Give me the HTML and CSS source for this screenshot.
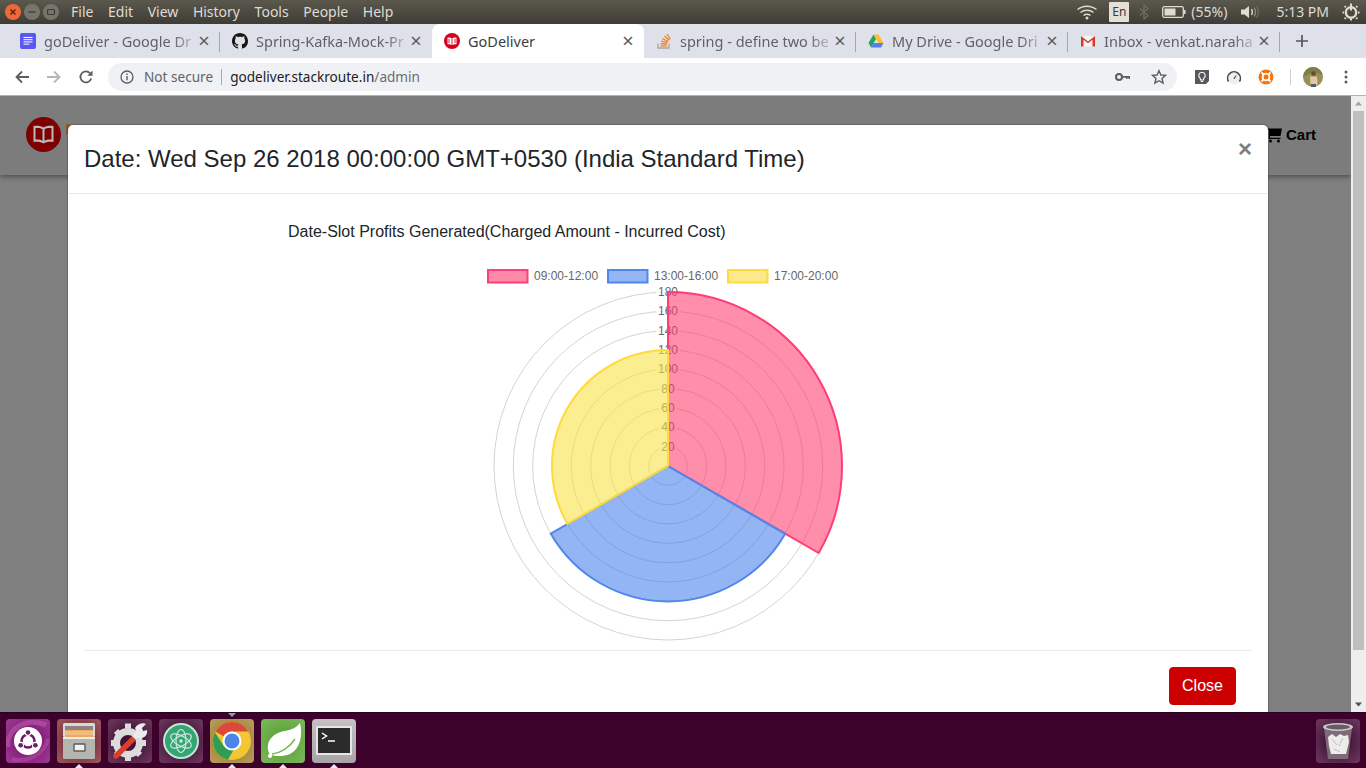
FILE: index.html
```
<!DOCTYPE html>
<html lang="en">
<head>
<meta charset="utf-8">
<title>GoDeliver</title>
<link rel="stylesheet" href="styles.css">
</head>
<body>
<div class="screen">
  <header class="topbar">
    <div class="winbtns">
      <span class="winbtn close"><svg viewBox="0 0 16 16" width="16" height="16"><path d="M5.5 5.5l5 5M10.500 5.500l-5 5" stroke="#5a1a08" stroke-width="1.300" fill="none"/></svg></span>
      <span class="winbtn"><svg viewBox="0 0 16 16" width="16" height="16"><path d="M4.500 8h7" stroke="#3b3a35" stroke-width="1.300" fill="none"/></svg></span>
      <span class="winbtn"><svg viewBox="0 0 16 16" width="16" height="16"><rect x="4.500" y="5.500" width="7" height="5" rx="1" stroke="#3b3a35" stroke-width="1.200" fill="none"/></svg></span>
    </div>
    <nav class="menu"><span>File</span><span>Edit</span><span>View</span><span>History</span><span>Tools</span><span>People</span><span>Help</span></nav>
    <div class="tray">
      <svg class="t-wifi" viewBox="0 0 22 16" width="22" height="16"><g fill="none" stroke="#dfdbd2" stroke-width="1.500"><path d="M1.500 5.500c5.500-4.500 13.500-4.500 19 0"/><path d="M4.500 8.500c3.800-3 9.200-3 13 0"/><path d="M7.500 11.500c2-1.500 5-1.500 7 0"/></g><circle cx="11" cy="14" r="1.500" fill="#dfdbd2"/></svg>
      <span class="t-en">En</span>
      <svg class="t-bt" viewBox="0 0 10 16" width="10" height="16"><path d="M1 4.500l8 7-4 3.500v-14l4 3.500-8 7" fill="none" stroke="#6f6c62" stroke-width="1.300"/></svg>
      <svg class="t-batt" viewBox="0 0 24 14" width="24" height="14"><rect x=".7" y="1.700" width="20.600" height="10.600" rx="1.500" fill="none" stroke="#dfdbd2" stroke-width="1.300"/><rect x="2.500" y="3.500" width="11" height="7" fill="#dfdbd2"/><rect x="22" y="5" width="1.500" height="4" fill="#dfdbd2"/></svg>
      <span class="t-pct">(55%)</span>
      <svg class="t-vol" viewBox="0 0 22 16" width="22" height="16"><path d="M1 5.500h3.500L9 2v12l-4.500-3.500H1z" fill="#dfdbd2"/><g fill="none" stroke-width="1.300"><path d="M11.500 5c1.200 2 1.200 4 0 6" stroke="#dfdbd2"/><path d="M14 3.500c2 3 2 6 0 9" stroke="#8d8a80"/><path d="M16.500 2c2.600 4 2.600 8 0 12" stroke="#6f6c62"/></g></svg>
      <span class="t-time">5:13 PM</span>
      <svg class="t-gear" viewBox="0 0 18 18" width="18" height="18"><g fill="none" stroke="#dfdbd2"><circle cx="9" cy="9.500" r="5.200" stroke-width="2.400"/><path d="M9 .5v7" stroke-width="2"/><path d="M9 15.500v2M2 9.500H.5M17.500 9.500H16M3.800 4.300L2.600 3.100M15.400 15.900l-1.200-1.200M3.800 14.700l-1.200 1.200M15.400 3.100l-1.200 1.200" stroke-width="2"/></g></svg>
    </div>
  </header>

  <div class="tabstrip">
    <div class="tab">
      <svg class="fav" viewBox="0 0 16 16" width="16" height="16"><rect width="16" height="16" rx="2" fill="#5a57f2"/><path d="M3.500 4.500h9M3.500 6.700h9M3.500 8.900h9M3.500 11.100h6" stroke="#fff" stroke-width="1"/></svg>
      <span class="title">goDeliver - Google Dr</span><span class="x">×</span>
    </div>
    <div class="tab">
      <svg class="fav" viewBox="0 0 16 16" width="16" height="16"><path fill="#161614" d="M8 0C3.580 0 0 3.580 0 8c0 3.540 2.290 6.530 5.470 7.590.4.070.55-.17.550-.38 0-.19-.01-.82-.01-1.490-2.010.37-2.530-.49-2.690-.94-.09-.23-.48-.94-.82-1.130-.28-.15-.68-.52-.01-.53.630-.01 1.080.58 1.230.82.720 1.210 1.870.87 2.330.66.070-.52.280-.87.510-1.070-1.780-.2-3.640-.89-3.640-3.950 0-.87.310-1.590.820-2.150-.08-.2-.36-1.020.08-2.120 0 0 .67-.21 2.200.82.640-.18 1.320-.27 2-.27s1.360.09 2 .27c1.530-1.040 2.200-.82 2.200-.82.440 1.100.160 1.920.08 2.120.51.560.820 1.270.820 2.150 0 3.070-1.870 3.750-3.650 3.950.290.250.540.730.540 1.480 0 1.070-.01 1.930-.01 2.200 0 .210.150.460.550.380A8.013 8.013 0 0016 8c0-4.420-3.580-8-8-8z"/></svg>
      <span class="title">Spring-Kafka-Mock-Pr</span><span class="x">×</span>
    </div>
    <div class="tab active">
      <svg class="fav" viewBox="0 0 16 16" width="16" height="16"><circle cx="8" cy="8" r="8" fill="#d6001c"/><path d="M8 5.400C7 4.700 5.500 4.400 3.500 4.600v6.600c2-.2 3.500.1 4.500.8 1-.7 2.500-1 4.500-.8V4.600C10.500 4.400 9 4.700 8 5.400z" fill="#fff"/><path d="M8 5.500v6M5 5.800v4.300" stroke="#d6001c" stroke-width=".9"/><path d="M11 5.800v4.300" stroke="#d6001c" stroke-width=".9"/></svg>
      <span class="title">GoDeliver</span><span class="x">×</span>
    </div>
    <div class="tab">
      <svg class="fav" viewBox="0 0 16 16" width="16" height="16"><path d="M2 10.500v4.500h11v-4.500" fill="none" stroke="#a9a59c" stroke-width="1.300"/><path d="M4.500 12.800h6.500M4.700 10.500l6.400.6M5.300 8.200l6.300 1.500M6.500 5.600l5.700 2.900M8.500 3l4.800 4.200M11.200 1l3 5.200" stroke="#f48024" stroke-width="1.300"/></svg>
      <span class="title">spring - define two be</span><span class="x">×</span>
    </div>
    <div class="tab">
      <svg class="fav" viewBox="0 0 16 16" width="16" height="16"><path d="M5.500 1.500h5l5 8.500h-5z" fill="#fbc02d"/><path d="M5.500 1.500L.5 10l2.500 4.500L8 6z" fill="#1fa463"/><path d="M3 14.500h10l2.500-4.500H5.500z" fill="#5a7df0"/></svg>
      <span class="title">My Drive - Google Dri</span><span class="x">×</span>
    </div>
    <div class="tab">
      <svg class="fav" viewBox="0 0 16 16" width="16" height="16"><path d="M1 3h14v10.500H1z" fill="#f4f4f4"/><path d="M1 13.500V3l7 5.500L15 3v10.500h-2.500V6.800L8 10.300 3.500 6.800v6.700z" fill="#d23a2a"/></svg>
      <span class="title">Inbox - venkat.naraha</span><span class="x">×</span>
    </div>
    <svg class="newtab" viewBox="0 0 14 14" width="14" height="14"><path d="M7 1v12M1 7h12" stroke="#55585e" stroke-width="1.700"/></svg>
  </div>

  <div class="toolbar">
    <svg class="tbtn" viewBox="0 0 16 16" width="16" height="16"><path d="M15 8H2.500M8 2.500L2.500 8 8 13.500" fill="none" stroke="#5a5d62" stroke-width="1.800"/></svg>
    <svg class="tbtn" viewBox="0 0 16 16" width="16" height="16"><path d="M1 8h12.500M8 2.500L13.500 8 8 13.500" fill="none" stroke="#b4b6b9" stroke-width="1.800"/></svg>
    <svg class="tbtn" viewBox="0 0 16 16" width="16" height="16"><path d="M13.200 9.500A5.500 5.500 0 1 1 12 4.200" fill="none" stroke="#5a5d62" stroke-width="1.800"/><path d="M14.500 1.500v5.200H9.300z" fill="#5a5d62"/></svg>
    <div class="omnibox">
      <svg class="info" viewBox="0 0 14 14" width="14" height="14"><circle cx="7" cy="7" r="6" fill="none" stroke="#5a5d62" stroke-width="1.300"/><path d="M7 6v4.300M7 3.500v1.500" stroke="#5a5d62" stroke-width="1.400"/></svg>
      <span class="notsecure">Not secure</span>
      <span class="sep"></span>
      <span class="url">godeliver.stackroute.in<span class="path">/admin</span></span>
      <span class="grow"></span>
      <svg class="key" viewBox="0 0 16 10" width="16" height="10"><circle cx="4" cy="5" r="3" fill="none" stroke="#5a5d62" stroke-width="2"/><path d="M6.500 4h8.500v3h-1.500V5.800h-1V7H11V5.800H6.500z" fill="#5a5d62"/></svg>
      <svg class="star" viewBox="0 0 16 16" width="16" height="16"><path d="M8 1.700l1.900 4.300 4.700.4-3.600 3.100 1.100 4.600L8 11.700l-4.100 2.400L5 9.500 1.400 6.400l4.700-.4z" fill="none" stroke="#5a5d62" stroke-width="1.400"/></svg>
    </div>
    <div class="exts">
      <svg viewBox="0 0 16 16" width="16" height="16"><path d="M1 1h14v11l-3 3H1z" fill="#55585e"/><path d="M8 3.200a3.300 3.300 0 0 0-1.800 6l.3 1.800h3l.3-1.800a3.300 3.300 0 0 0-1.800-6z" fill="none" stroke="#fff" stroke-width="1.100"/><path d="M6.800 12.500h2.400" stroke="#fff" stroke-width="1.100"/></svg>
      <svg viewBox="0 0 16 16" width="16" height="16"><circle cx="8" cy="8.500" r="7" fill="#eeeeee"/><path d="M2.500 12.500a6.400 6.400 0 1 1 11 0" fill="none" stroke="#44474c" stroke-width="1.500"/><path d="M7.300 9.300L11 5.200 8.800 10z" fill="#44474c"/></svg>
      <svg viewBox="0 0 16 16" width="16" height="16"><circle cx="8" cy="8" r="7.500" fill="#f4730c"/><circle cx="8" cy="8" r="3.400" fill="none" stroke="#fff" stroke-width="1.800"/><path d="M3.500 3.500l2.500 2.500M12.500 3.500L10 6M3.500 12.500L6 10M12.500 12.500L10 10" stroke="#fff" stroke-width="1.800"/></svg>
    </div>
    <span class="tsep"></span>
    <svg class="avatar" viewBox="0 0 20 20" width="20" height="20"><circle cx="10" cy="10" r="10" fill="#9a8f5a"/><path d="M0 10a10 10 0 0 1 10-10c5 0 8 3 10 8l-8-3-6 2z" fill="#7a8044"/><circle cx="10.500" cy="6.500" r="2.300" fill="#6b4a30"/><path d="M7 9.500h7l.5 8-2 2h-3l-2-2z" fill="#e2c9a0"/><path d="M8 17h5v3H8z" fill="#4a5a78"/></svg>
    <svg class="dots" viewBox="0 0 4 14" width="4" height="14"><circle cx="2" cy="2" r="1.500" fill="#5a5d62"/><circle cx="2" cy="7" r="1.500" fill="#5a5d62"/><circle cx="2" cy="12" r="1.500" fill="#5a5d62"/></svg>
  </div>

  <main class="page">
    <div class="site">
      <div class="navbar">
        <svg class="logo" viewBox="0 0 35 35" width="35" height="35"><circle cx="17.500" cy="17.500" r="17.500" fill="#7f0000"/><path d="M17.500 10.500C15 8.800 11.500 8.300 7.500 9v16c4-.7 7.500-.2 10 1.500 2.500-1.700 6-2.200 10-1.500V9c-4-.7-7.500-.2-10 1.500z" fill="#b9b9b9"/><path d="M9.500 11c3-.3 5.500.1 7 1.200v11.500c-1.500-1-4-1.400-7-1.200zM25.500 11c-3-.3-5.500.1-7 1.200v11.500c1.500-1 4-1.400 7-1.200z" fill="#7f0000"/></svg>
        <span class="brand-sliver"></span>
        <span class="nav-red"></span>
        <span class="grow"></span>
        <svg class="cart" viewBox="0 0 16 16" width="16" height="16"><path d="M0 1.500h16L14.500 9H4v1.800h10.500v1.200H2.800V2.700H0z" fill="#000"/><circle cx="4.500" cy="14" r="1.500" fill="#000"/><circle cx="12.500" cy="14" r="1.500" fill="#000"/></svg>
        <span class="cart-label">Cart</span>
      </div>
    </div>
    <div class="scrollbar">
      <svg class="arrow" viewBox="0 0 15 15" width="15" height="15"><path d="M4 9.500h7L7.500 5.500z" fill="#a0a0a0"/></svg>
      <span class="thumb"></span>
      <svg class="arrow" viewBox="0 0 15 15" width="15" height="15"><path d="M4 5.500h7L7.500 9.500z" fill="#505050"/></svg>
    </div>
    <div class="overlay">
      <section class="modal">
        <div class="modal-header">
          <h5 class="modal-title">Date: Wed Sep 26 2018 00:00:00 GMT+0530 (India Standard Time)</h5>
          <span class="modal-x">×</span>
        </div>
        <div class="modal-body">
          <svg class="chart" viewBox="84 194 1168 456" width="1168" height="456">
            <text class="c-title" x="288" y="237">Date-Slot Profits Generated(Charged Amount - Incurred Cost)</text>
            <g class="legend">
              <rect x="488" y="270" width="39.500" height="12.500" fill="#ff8aa8" stroke="#ff3d77" stroke-width="2"/>
              <text x="534" y="280">09:00-12:00</text>
              <rect x="608" y="270" width="39.500" height="12.500" fill="#95b6f5" stroke="#4f87ec" stroke-width="2"/>
              <text x="654" y="280">13:00-16:00</text>
              <rect x="728" y="270" width="39.500" height="12.500" fill="#fbe98a" stroke="#ffdb3a" stroke-width="2"/>
              <text x="774" y="280">17:00-20:00</text>
            </g>
            <g class="grid">
              <circle cx="668" cy="466" r="19.300"/><circle cx="668" cy="466" r="38.700"/><circle cx="668" cy="466" r="58"/><circle cx="668" cy="466" r="77.300"/><circle cx="668" cy="466" r="96.700"/><circle cx="668" cy="466" r="116"/><circle cx="668" cy="466" r="135.300"/><circle cx="668" cy="466" r="154.700"/><circle cx="668" cy="466" r="174"/>
            </g>
            <g class="backdrops">
              <rect x="659" y="441" width="18" height="13"/><rect x="659" y="421" width="18" height="13"/><rect x="659" y="402" width="18" height="13"/><rect x="659" y="383" width="18" height="13"/><rect x="656" y="363" width="24" height="13"/><rect x="656" y="344" width="24" height="13"/><rect x="656" y="325" width="24" height="13"/><rect x="656" y="305" width="24" height="13"/><rect x="656" y="286" width="24" height="13"/>
            </g>
            <g class="ticks">
              <text x="668" y="451">20</text><text x="668" y="431">40</text><text x="668" y="412">60</text><text x="668" y="393">80</text><text x="668" y="373">100</text><text x="668" y="354">120</text><text x="668" y="335">140</text><text x="668" y="315">160</text><text x="668" y="296">180</text>
            </g>
            <path class="s-pink" d="M668 466V292A174 174 0 0 1 818.700 553Z"/>
            <path class="s-blue" d="M668 466L785.200 533.700A135.300 135.300 0 0 1 550.800 533.700Z"/>
            <path class="s-yellow" d="M668 466L567.500 524A116 116 0 0 1 668 350Z"/>
          </svg>
        </div>
        <div class="modal-footer"><button class="btn-close" type="button">Close</button></div>
      </section>
    </div>
  </main>

  <footer class="dock">
    <span class="dock-arrow a-top"></span>
    <div class="tile t-ubuntu"><svg viewBox="0 0 44 44" width="44" height="44"><path d="M2 28C0 10 20 -2 40 6" fill="none" stroke="#c86ab4" stroke-width="5" opacity=".45"/><path d="M6 40c14 4 32-4 36-20" fill="none" stroke="#c86ab4" stroke-width="4" opacity=".35"/><circle cx="22" cy="22" r="14" fill="#fff"/><circle cx="22" cy="22" r="6.500" fill="none" stroke="#6d1b66" stroke-width="2.500"/><circle cx="22" cy="13.500" r="3.400" fill="#fff"/><circle cx="14.600" cy="26.200" r="3.400" fill="#fff"/><circle cx="29.400" cy="26.200" r="3.400" fill="#fff"/><circle cx="22" cy="13.500" r="2.300" fill="#6d1b66"/><circle cx="14.600" cy="26.200" r="2.300" fill="#6d1b66"/><circle cx="29.400" cy="26.200" r="2.300" fill="#6d1b66"/></svg></div>
    <div class="tile t-files"><svg viewBox="0 0 44 44" width="44" height="44"><rect x="6" y="4" width="32" height="14" rx="1.500" fill="#d8d8d4"/><rect x="8" y="7" width="28" height="11" fill="#8a857e"/><rect x="8" y="11" width="28" height="7" fill="#f0a860"/><path d="M8 13h28M8 15h28" stroke="#f9d9a8" stroke-width=".8"/><rect x="6" y="18" width="32" height="22" rx="1.500" fill="#b5b5b0"/><rect x="6" y="18" width="32" height="2" fill="#ececea"/><rect x="17" y="25" width="11" height="7" rx=".5" fill="#f1f1ee" stroke="#5c5c58" stroke-width="1.400"/></svg></div>
    <div class="tile t-tools"><svg viewBox="0 0 44 44" width="44" height="44"><circle cx="20" cy="24" r="11.500" fill="none" stroke="#dcdcdc" stroke-width="7"/><g stroke="#dcdcdc" stroke-width="6"><path d="M20 4.500v5M20 38v4M3 24h5M32 24h6M8 12l3.500 3.500M28.500 32.500l3.500 3.500M8 36l3.500-3.500"/></g><path d="M8 37L27 18" stroke="#d8402a" stroke-width="5.500" stroke-linecap="round"/><path d="M26 19l5-5" stroke="#ececec" stroke-width="6"/><path d="M27 9c2-4 8-6 11-4l-4 4 1 3 4-1c1 4-2 9-8 8z" fill="#ececec"/></svg></div>
    <div class="tile t-atom"><svg viewBox="0 0 44 44" width="44" height="44"><circle cx="22" cy="22" r="17" fill="#35a574" stroke="#c4e6d4" stroke-width="2"/><g fill="none" stroke="#cfe9dc" stroke-width="1.200"><ellipse cx="22" cy="22" rx="11.500" ry="5" transform="rotate(30 22 22)"/><ellipse cx="22" cy="22" rx="11.500" ry="5" transform="rotate(90 22 22)"/><ellipse cx="22" cy="22" rx="11.500" ry="5" transform="rotate(150 22 22)"/></g><circle cx="22" cy="22" r="1.800" fill="#cfe9dc"/></svg></div>
    <div class="tile t-chrome"><svg viewBox="0 0 44 44" width="44" height="44"><circle cx="22" cy="22" r="19" fill="#f5c633"/><path d="M22 3a19 19 0 0 1 16.500 9.500H22A9.500 9.500 0 0 0 13.800 17.200L5.500 12.500A19 19 0 0 1 22 3z" fill="#d9493c"/><path d="M5 13.500a19 19 0 0 0 13 27.100l8-13.800A9.500 9.500 0 0 1 13.500 26.500z" fill="#2d9e52"/><circle cx="22" cy="22" r="9.500" fill="#fff"/><circle cx="22" cy="22" r="7.500" fill="#4a86e8"/></svg></div>
    <div class="tile t-spring"><svg viewBox="0 0 44 44" width="44" height="44"><path d="M9 36C2 22 14 13 24 12c6-1 11-3 15-8 3 13 0 26-10 31-7 3-14 2-20 1z" fill="#fff"/><path d="M11 35c9-1 18-7 23-15" fill="none" stroke="#78b854" stroke-width="1.500"/><circle cx="9" cy="37" r="2" fill="#fff"/></svg></div>
    <div class="tile t-term"><svg viewBox="0 0 44 44" width="44" height="44"><rect x="4" y="7" width="36" height="29" rx="1" fill="#e6e6e6"/><rect x="6" y="9" width="32" height="25" fill="#2b2b2b"/><path d="M10 14l4.500 3L10 20" fill="none" stroke="#fff" stroke-width="1.500"/><path d="M16 22h7" stroke="#fff" stroke-width="1.500"/></svg></div>
    <span class="grow"></span>
    <div class="tile t-trash"><svg viewBox="0 0 44 44" width="44" height="44"><path d="M8 9l4 31h20l4-31z" fill="#7d6c78"/><ellipse cx="22" cy="8" rx="15" ry="4" fill="#c9c9c9"/><ellipse cx="22" cy="8" rx="12" ry="2.500" fill="#6a5a66"/><path d="M12 18l4-3 4 3 4-3 4 2 4-1 1 7-3 12H15l-2-8z" fill="#ececec"/><path d="M16 20l5 6M27 19l-4 8M18 30l6 3" stroke="#bdbdbd" stroke-width="1"/></svg></div>
    <span class="dock-arrow b1"></span><span class="dock-arrow b2"></span><span class="dock-arrow b3"></span><span class="dock-arrow b4"></span>
  </footer>
</div>
</body>
</html>
```
FILE: styles.css
```
* { box-sizing: border-box; }
html, body { margin: 0; height: 100%; overflow: hidden; }
body { font-family: "Noto Sans", "Open Sans", sans-serif; }
.screen { width: 1366px; height: 768px; display: flex; flex-direction: column; position: relative; overflow: hidden; }
.grow { flex: 1; }

/* top system bar */
.topbar { height: 24px; flex: none; display: flex; align-items: center; background: linear-gradient(#5b584d, #3e3c36); color: #dfdbd2; font-size: 14px; }
.winbtns { display: flex; gap: 3px; padding-left: 5px; }
.winbtn { width: 16px; height: 16px; border-radius: 50%; background: #76746b; display: block; }
.winbtn svg { display: block; }
.winbtn.close { background: #ec6a3a; }
.menu { display: flex; gap: 14.600px; margin-left: 12px; padding-bottom: 2px; }
.tray { margin-left: auto; display: flex; align-items: center; }
.t-wifi { margin-right: 11px; }
.t-en { width: 20px; height: 20px; background: #e4e0d8; color: #3b3a35; font-size: 12px; line-height: 20px; text-align: center; border-radius: 1px; margin-right: 10px; }
.t-bt { margin-right: 13px; }
.t-batt { margin-right: 5px; }
.t-pct { margin-right: 13px; padding-bottom: 2px; }
.t-vol { margin-right: 14px; }
.t-time { margin-right: 13px; padding-bottom: 2px; }
.t-gear { margin-right: 6px; }

/* tabs */
.tabstrip { height: 34px; flex: none; background: #dee1e9; display: flex; align-items: center; padding-left: 8px; position: relative; z-index: 1; }
.tab { width: 212px; height: 34px; display: flex; align-items: center; padding: 0 9px 0 12px; position: relative; color: #5f6368; font-size: 14.500px; }
.tab::after { content: ""; position: absolute; right: 0; top: 8px; height: 20px; width: 1px; background: #a3a6ad; }
.tab:nth-child(2)::after, .tab.active::after { display: none; }
.tab.active { background: #fff; border-radius: 8px 8px 0 0; color: #3c4043; height: 39px; align-self: flex-start; padding-bottom: 5px; }
.fav { flex: none; margin-right: 8px; }
.title { flex: 1; min-width: 0; white-space: nowrap; overflow: hidden; -webkit-mask-image: linear-gradient(90deg, #000 86%, rgba(0,0,0,.25) 100%); mask-image: linear-gradient(90deg, #000 86%, rgba(0,0,0,.25) 100%); }
.tab.active .title { -webkit-mask-image: none; mask-image: none; }
.x { flex: none; width: 14px; margin-left: 3px; text-align: center; font-size: 20px; line-height: 20px; color: #5a5d62; }
.newtab { margin-left: 15px; }

/* toolbar */
.toolbar { flex: none; background: #fff; display: flex; align-items: center; padding-left: 14px; position: relative; border-bottom: 1px solid #b3b3b3; box-sizing: content-box; height: 37px; }
.tbtn { margin-right: 16px; }
.tbtn:nth-of-type(3) { margin-right: 14px; }
.omnibox { width: 1069px; height: 28px; border-radius: 14px; background: #f0f1f4; display: flex; align-items: center; padding: 0 10px 0 12px; font-size: 13.600px; color: #5f6368; }
.info { margin-right: 10px; }
.sep { width: 1px; height: 16px; background: #a8aaae; margin: 0 8px; }
.url { color: #202124; }
.path { color: #6a6d72; }
.key { margin-right: 20px; }
.exts { display: flex; gap: 16px; margin-left: 17px; }
.tsep { width: 1px; height: 16px; background: #d0d1d3; margin: 0 12px 0 16px; }
.dots { margin-left: 21px; }

/* page */
.page { flex: 1; min-height: 0; position: relative; display: flex; background: #808080; overflow: hidden; }
.site { flex: 1; }
.navbar { height: 79px; background: #7b7c7b; box-shadow: 0 2px 5px rgba(0,0,0,.4); display: flex; align-items: center; padding: 0 35px 3px 26px; }
.logo { flex: none; }
.brand-sliver { width: 4px; height: 10px; background: #8f5a1c; margin-left: 5px; margin-top: -11px; }
.nav-red { width: 41px; height: 2px; background: #7f0000; margin-left: 37px; margin-top: -17px; }
.cart { margin-right: 4px; margin-top: 1px; }
.cart-label { font: bold 15px "Liberation Sans", Arial, sans-serif; color: #000; margin-top: 1px; }
.scrollbar { width: 15px; flex: none; background: #eeeeee; display: flex; flex-direction: column; align-items: center; justify-content: space-between; }
.arrow { display: block; flex: none; }
.thumb { width: 11px; flex: 1; background: #bfbfbf; margin-bottom: 47px; }

/* modal */
.overlay { position: absolute; left: 0; top: 0; right: 15px; bottom: 0; padding: 29px 0 0 68px; }
.modal { width: 1200px; background: #fff; border-radius: 5px; box-shadow: 0 0 2px rgba(0,0,0,.6); font-family: "Liberation Sans", Arial, sans-serif; color: #212529; }
.modal-header { height: 69px; padding: 16px; border-bottom: 1px solid #e9ecef; display: flex; justify-content: space-between; }
.modal-title { margin: 0; font-size: 24px; font-weight: 400; line-height: 36px; }
.modal-x { font-size: 24px; font-weight: 700; line-height: 24px; color: #7d7d7d; margin-top: -4px; }
.modal-body { padding: 0 16px; height: 456px; }
.chart { display: block; }
.c-title { font-size: 16px; fill: #212529; }
.legend text { font-size: 12px; fill: #666; }
.grid circle { fill: none; stroke: #d4d4d4; stroke-width: 1; }
.backdrops rect { fill: #fff; fill-opacity: .75; }
.ticks text { font-size: 12px; fill: #666; text-anchor: middle; }
.s-pink { fill: rgba(255, 60, 110, .58); stroke: #ff3d77; stroke-width: 2; }
.s-blue { fill: rgba(60, 120, 235, .55); stroke: #4f87ec; stroke-width: 2; }
.s-yellow { fill: rgba(248, 226, 70, .6); stroke: #ffdb3a; stroke-width: 2; }
.modal-footer { margin: 0 16px; padding: 16px 16px 16px 0; border-top: 1px solid #e9ecef; display: flex; justify-content: flex-end; }
.btn-close { width: 67px; height: 38px; background: #cc0000; border: 1px solid #cc0000; border-radius: 4px; color: #fff; font: 16px "Liberation Sans", Arial, sans-serif; padding: 0; }

/* dock */
.dock { height: 56px; flex: none; background: #3d022c; border-top: 1px solid #2a0120; display: flex; align-items: center; gap: 7px; padding: 0 6px; position: relative; }
.tile { width: 44px; height: 44px; border-radius: 4px; flex: none; overflow: hidden; }
.tile svg { display: block; }
.t-ubuntu { background: radial-gradient(circle, #7d1a78 30%, #a23a96 100%); }
.t-files { background: radial-gradient(circle, #7a3040 40%, #a05a60 100%); }
.t-tools { background: radial-gradient(circle, #431238 30%, #6f3a60 100%); }
.t-atom { background: radial-gradient(circle, #431238 30%, #6f3a60 100%); }
.t-chrome { background: radial-gradient(circle, #a08438 40%, #b8a060 100%); }
.t-spring { background: radial-gradient(circle, #64a842 40%, #7cb85c 100%); }
.t-term { background: linear-gradient(#c4c0c4, #a8a4a8); }
.t-trash { background: radial-gradient(circle, #431238 30%, #6f3a60 100%); }
.dock-arrow { position: absolute; width: 0; height: 0; border-left: 4px solid transparent; border-right: 4px solid transparent; }
.a-top { left: 228px; top: 0; border-top: 4px solid #9a9a9a; }
.b1, .b2, .b3, .b4 { bottom: 0; border-bottom: 4px solid #e8e8e8; }
.b1 { left: 75px; }
.b2 { left: 228px; }
.b3 { left: 279px; }
.b4 { left: 330px; }
```
